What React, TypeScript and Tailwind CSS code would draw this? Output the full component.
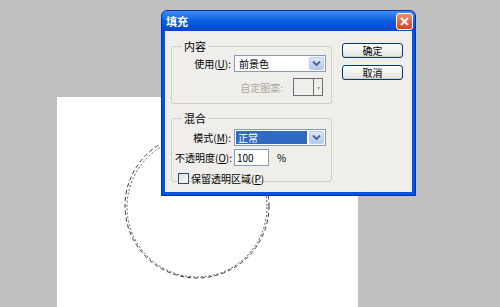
import React from "react";

const FONT = { fontFamily: '"Noto Sans CJK SC", "Liberation Sans", sans-serif' };

function Chevron({ color = "#4d6185" }: { color?: string }) {
  return (
    <svg width="9" height="7" viewBox="0 0 9 7">
      <path d="M1 1.5 L4.5 5 L8 1.5" fill="none" stroke={color} strokeWidth="1.8" />
    </svg>
  );
}

function Select({ value, selected = false }: { value: string; selected?: boolean }) {
  return (
    <div className="flex h-[17px] w-[92px] items-stretch border border-[#7f9db9] bg-white">
      <div className="flex flex-1 items-center p-[1px]">
        <span
          className={
            selected
              ? "flex h-full w-full items-center bg-[#316ac5] pl-[2px] text-white"
              : "pl-[3px] text-black"
          }
        >
          {value}
        </span>
      </div>
      <div className="m-[1px] flex w-[15px] items-center justify-center rounded-[2px] border border-[#b9cbf3] bg-gradient-to-b from-[#dfe9fd] to-[#b4c8f6]">
        <Chevron />
      </div>
    </div>
  );
}

function Group({ title, children, className }: { title: string; children: React.ReactNode; className?: string }) {
  return (
    <fieldset className={"rounded-[3px] border border-[#d0d0bf] px-[3px] " + (className ?? "")}>
      <legend className="ml-[7px] px-[2px] text-[11px] leading-[12px] text-black">{title}</legend>
      {children}
    </fieldset>
  );
}

function XpButton({ label }: { label: string }) {
  return (
    <button className="flex h-[15px] w-[61px] items-center justify-center rounded-[3px] border border-[#003c74] bg-gradient-to-b from-white to-[#e3e3dc] leading-none text-black shadow-[inset_0_-1px_0_#d6d0c5]">
      {label}
    </button>
  );
}

export default function App() {
  return (
    <div className="relative h-[307px] w-[500px] overflow-hidden bg-[#c0c0c0] text-[10px]" style={FONT}>
      {/* canvas */}
      <div className="absolute left-[57px] top-[97px] h-[210px] w-[301px] bg-white">
        <svg width="301" height="210" className="absolute left-0 top-0">
          <circle cx="140" cy="109" r="72" fill="none" stroke="#333" strokeWidth="1" strokeDasharray="4 3" />
          <circle cx="140" cy="110" r="70" fill="none" stroke="#555" strokeWidth="1" strokeDasharray="2 2" />
        </svg>
      </div>

      {/* dialog */}
      <div className="absolute left-[161px] top-[10px] flex h-[186px] w-[255px] flex-col overflow-hidden rounded-t-[6px] border border-[#0831a9] bg-[#0054e3]">
        <div className="flex h-[20px] items-center justify-between bg-gradient-to-b from-[#3d8df7] via-[#0a5de0] to-[#0346d0] pl-[4px] pr-[2px]">
          <span className="text-[11px] font-bold text-white">填充</span>
          <div className="flex h-[17px] w-[17px] items-center justify-center rounded-[3px] border border-white bg-gradient-to-b from-[#f08a6c] to-[#d5401a]">
            <svg width="9" height="9" viewBox="0 0 9 9">
              <path d="M1 1 L8 8 M8 1 L1 8" stroke="white" strokeWidth="2" />
            </svg>
          </div>
        </div>
        <div className="mx-[3px] mb-[3px] flex flex-1 gap-[10px] bg-[#efeeea] pl-[6px] pt-[9px]">
          <div className="flex w-[161px] shrink-0 flex-col gap-[8px]">
            <Group title="内容" className="h-[64px]">
              <div className="mt-[3px] flex items-center">
                <span className="w-[56px] text-right">
                  使用(<span className="underline">U</span>):
                </span>
                <div className="ml-[3px]">
                  <Select value="前景色" />
                </div>
              </div>
              <div className="mt-[6px] flex items-center">
                <span className="w-[108px] shrink-0 text-right text-[#aca899]">自定图案:</span>
                <div className="ml-[10px] flex h-[18px] w-[30px] shrink-0 border border-[#6f6f6f] bg-[#efeeea]">
                  <div className="flex-1 border-r border-[#6f6f6f]" />
                  <div className="flex w-[8px] items-center justify-center text-[6px] text-[#aca899]">▾</div>
                </div>
              </div>
            </Group>
            <Group title="混合" className="h-[70px]">
              <div className="mt-[5px] flex items-center">
                <span className="w-[56px] text-right">
                  模式(<span className="underline">M</span>):
                </span>
                <div className="ml-[3px]">
                  <Select value="正常" selected />
                </div>
              </div>
              <div className="mt-[3px] flex items-center">
                <span className="w-[56px] whitespace-nowrap text-right">
                  不透明度(<span className="underline">O</span>):
                </span>
                <div className="ml-[3px] flex h-[17px] w-[35px] items-center border border-[#7f9db9] bg-white pl-[2px]">100</div>
                <span className="ml-[8px]">%</span>
              </div>
              <div className="mt-[5px] flex items-center pl-[3px]">
                <div className="h-[11px] w-[11px] border border-[#1c5180] bg-gradient-to-br from-[#dcdcd7] to-white" />
                <span className="ml-[2px]">
                  保留透明区域(<span className="underline">P</span>)
                </span>
              </div>
            </Group>
          </div>
          <div className="flex flex-col gap-[7px] pt-[3px]">
            <XpButton label="确定" />
            <XpButton label="取消" />
          </div>
        </div>
      </div>
    </div>
  );
}
